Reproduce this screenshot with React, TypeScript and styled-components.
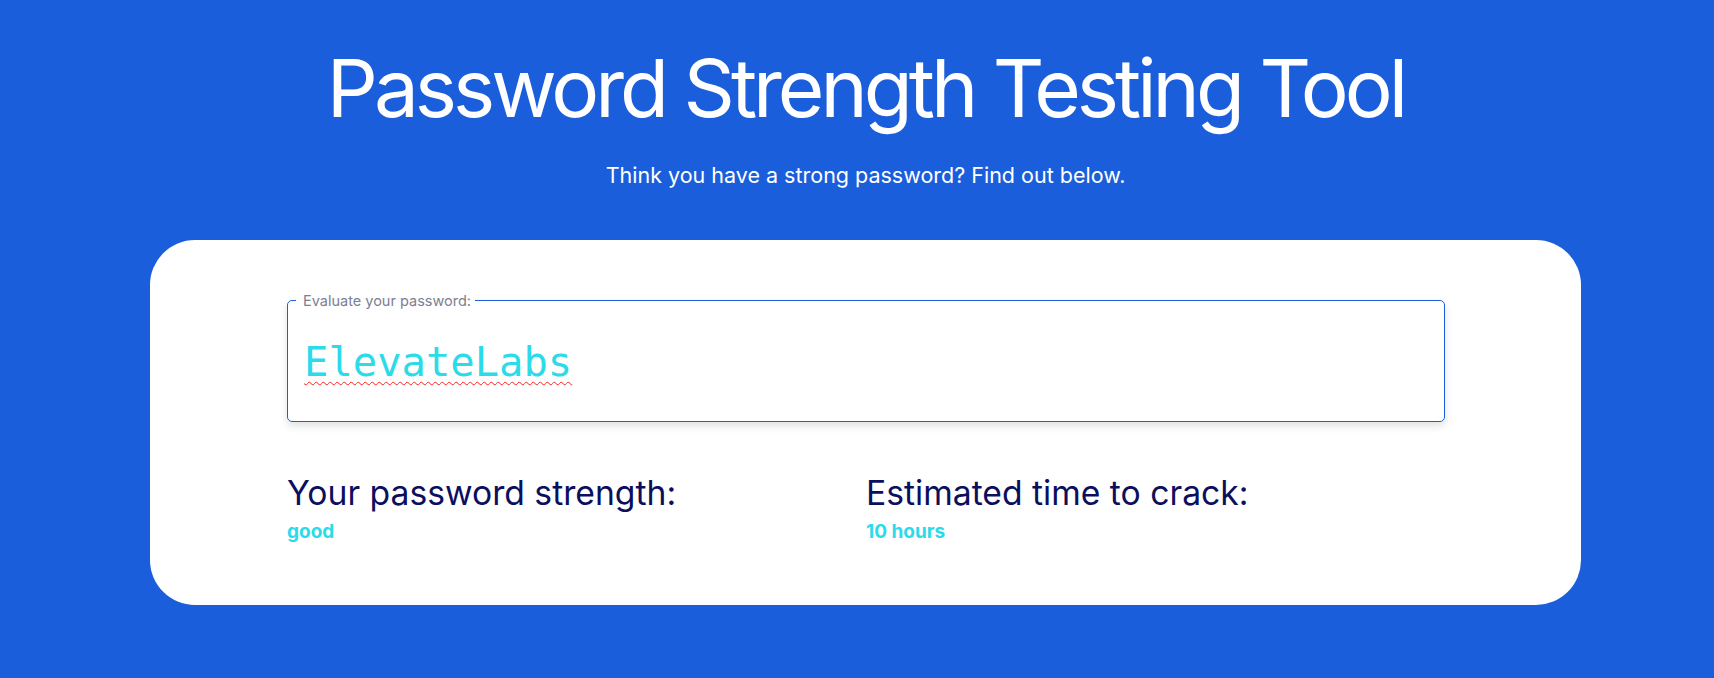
import React, { useState } from 'react'
import styled, { createGlobalStyle } from 'styled-components'

const GlobalStyle = createGlobalStyle`
	* {
		box-sizing: border-box;
	}
	html,
	body {
		margin: 0;
		background: #1a5edb;
	}
	body {
		font-family: Inter, 'Noto Sans', sans-serif;
	}
`

const Page = styled.main`
	min-height: 678px;
	padding: 0 133px 0 150px;
	display: flex;
	flex-direction: column;
	align-items: center;
`

const Title = styled.h1`
	margin: 40px 0 0;
	font-size: 80px;
	font-weight: 400;
	line-height: 1.2;
	color: #ffffff;
	letter-spacing: -4px;
`

const Subtitle = styled.p`
	margin: 26px 0 0;
	font-size: 21.5px;
	color: #ffffff;
`

const Card = styled.section`
	width: 100%;
	margin-top: 52px;
	background: #ffffff;
	border-radius: 45px;
	padding: 52px 136px 62px 137px;
`

const Field = styled.fieldset`
	margin: 0;
	padding: 0 16px;
	border: 1px solid #1a5edb;
	border-radius: 5px;
	box-shadow: 0 4px 8px rgba(0, 0, 0, 0.12);
`

const Legend = styled.legend`
	margin-left: -8px;
	padding: 0 4px 0 7px;
	font-size: 14.5px;
	color: #7b8093;
`

const PasswordInput = styled.input`
	display: block;
	width: 100%;
	height: 112px;
	padding: 0 0 6px;
	border: 0;
	outline: none;
	background: transparent;
	font-family: 'DejaVu Sans Mono', monospace;
	font-size: 40.5px;
	color: #2cdbe9;
	text-decoration: underline wavy #ff1f1f;
	text-decoration-thickness: 1px;
	text-underline-offset: 5px;
`

const Results = styled.div`
	display: grid;
	grid-template-columns: 1fr 1fr;
	margin-top: 50px;
`

const ResultLabel = styled.h2`
	margin: 0;
	font-size: 33.7px;
	font-weight: 400;
	line-height: 1.25;
	color: #0b0f5e;
`

const ResultValue = styled.p`
	margin: 6px 0 0;
	font-size: 19px;
	font-weight: 700;
	color: #2cdbe9;
`

const results = [
	{ label: 'Your password strength:', value: 'good' },
	{ label: 'Estimated time to crack:', value: '10 hours' },
]

export default function App() {
	const [password, setPassword] = useState('ElevateLabs')

	return (
		<>
			<GlobalStyle />
			<Page>
				<Title>Password Strength Testing Tool</Title>
				<Subtitle>Think you have a strong password? Find out below.</Subtitle>
				<Card>
					<Field>
						<Legend>Evaluate your password:</Legend>
						<PasswordInput
							type='text'
							value={password}
							spellCheck
							onChange={(e) => setPassword(e.target.value)}
						/>
					</Field>
					<Results>
						{results.map((item) => (
							<div key={item.label}>
								<ResultLabel>{item.label}</ResultLabel>
								<ResultValue>{item.value}</ResultValue>
							</div>
						))}
					</Results>
				</Card>
			</Page>
		</>
	)
}
